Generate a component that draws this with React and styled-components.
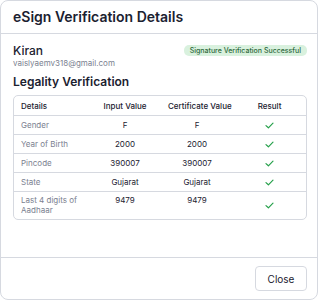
import styled, { createGlobalStyle } from 'styled-components';

const GlobalStyle = createGlobalStyle`
  html, body {
    margin: 0;
    padding: 0;
    background: #ffffff;
  }
  body {
    font-family: Inter, "Noto Sans", sans-serif;
    color: #1b2130;
  }
`;

const rows = [
  { label: 'Gender', input: 'F', cert: 'F' },
  { label: 'Year of Birth', input: '2000', cert: '2000' },
  { label: 'Pincode', input: '390007', cert: '390007' },
  { label: 'State', input: 'Gujarat', cert: 'Gujarat' },
  { label: 'Last 4 digits of Aadhaar', input: '9479', cert: '9479', tall: true },
];

function Check() {
  return (
    <svg width="9" height="7" viewBox="0 0 9 7" fill="none">
      <path d="M1 3.6 L3.4 5.8 L8 1.2" stroke="#25a04a" strokeWidth="1.2" strokeLinecap="round" strokeLinejoin="round" />
    </svg>
  );
}

function App() {
  return (
    <>
      <GlobalStyle />
      <Dialog>
        <Header>
          <Title>eSign Verification Details</Title>
        </Header>
        <Body>
          <Person>
            <div>
              <Name>Kiran</Name>
              <Email>vaislyaemv318@gmail.com</Email>
            </div>
            <Badge>Signature Verification Successful</Badge>
          </Person>
          <Heading>Legality Verification</Heading>
          <Table>
            <Row>
              <Cell head>Details</Cell>
              <Cell head center>Input Value</Cell>
              <Cell head center>Certificate Value</Cell>
              <Cell head center>Result</Cell>
            </Row>
            {rows.map((r) => (
              <Row key={r.label} tall={r.tall}>
                <Cell muted>{r.label}</Cell>
                <Cell center>{r.input}</Cell>
                <Cell center>{r.cert}</Cell>
                <Cell center icon>
                  <Check />
                </Cell>
              </Row>
            ))}
          </Table>
        </Body>
        <Footer>
          <CloseButton>Close</CloseButton>
        </Footer>
      </Dialog>
    </>
  );
}

const Dialog = styled.div`
  box-sizing: border-box;
  width: 318px;
  height: 300px;
  border: 1px solid #d6d9e0;
  border-radius: 8px;
  background: #ffffff;
  display: flex;
  flex-direction: column;
  overflow: hidden;
`;

const Header = styled.div`
  box-sizing: border-box;
  height: 33px;
  padding: 0 12px;
  display: flex;
  align-items: center;
  border-bottom: 1px solid #d6d9e0;
`;

const Title = styled.h1`
  margin: 0;
  font-size: 14px;
  font-weight: 600;
  line-height: 18px;
  color: #1b2130;
`;

const Body = styled.div`
  flex: 1;
  padding: 9px 10px 0 12px;
`;

const Person = styled.div`
  display: flex;
  justify-content: space-between;
  align-items: flex-start;
`;

const Name = styled.div`
  font-size: 12px;
  line-height: 15px;
  font-weight: 500;
  color: #1b2130;
`;

const Email = styled.div`
  font-size: 8px;
  line-height: 10px;
  color: #7b8190;
`;

const Badge = styled.span`
  margin-top: 2px;
  height: 11px;
  padding: 0 6px;
  display: inline-flex;
  align-items: center;
  border-radius: 5px;
  background: #d9f1de;
  color: #2e6a3c;
  font-size: 7px;
  font-weight: 500;
`;

const Heading = styled.h2`
  margin: 6px 0 5px;
  font-size: 12px;
  line-height: 16px;
  font-weight: 600;
  color: #1b2130;
`;

const Table = styled.div`
  border: 1px solid #d6d9e0;
  border-radius: 5px;
  overflow: hidden;
`;

const Row = styled.div`
  display: grid;
  grid-template-columns: 75px 72px 72px 1fr;
  min-height: ${(p) => (p.tall ? '28px' : '19px')};
  align-items: ${(p) => (p.tall ? 'start' : 'center')};
  padding: ${(p) => (p.tall ? '3px 0 4px' : '0')};
  box-sizing: border-box;
  & + & {
    border-top: 1px solid #d6d9e0;
  }
`;

const Cell = styled.div`
  padding: 0 7px;
  font-size: 8px;
  line-height: 10px;
  font-weight: ${(p) => (p.head ? 500 : 400)};
  white-space: ${(p) => (p.head ? 'nowrap' : 'normal')};
  color: ${(p) => (p.muted ? '#7b8190' : '#1b2130')};
  text-align: ${(p) => (p.center ? 'center' : 'left')};
  ${(p) => p.icon && 'align-self: center; display: flex; justify-content: center;'}
`;

const Footer = styled.div`
  box-sizing: border-box;
  height: 42px;
  border-top: 1px solid #d6d9e0;
  display: flex;
  justify-content: flex-end;
  align-items: flex-start;
  padding: 8px 10px 0;
`;

const CloseButton = styled.button`
  width: 52px;
  height: 25px;
  border: 1px solid #d6d9e0;
  border-radius: 4px;
  background: #ffffff;
  font-family: Inter, "Noto Sans", sans-serif;
  font-size: 10px;
  font-weight: 400;
  color: #1b2130;
  cursor: pointer;
`;

export default App;
